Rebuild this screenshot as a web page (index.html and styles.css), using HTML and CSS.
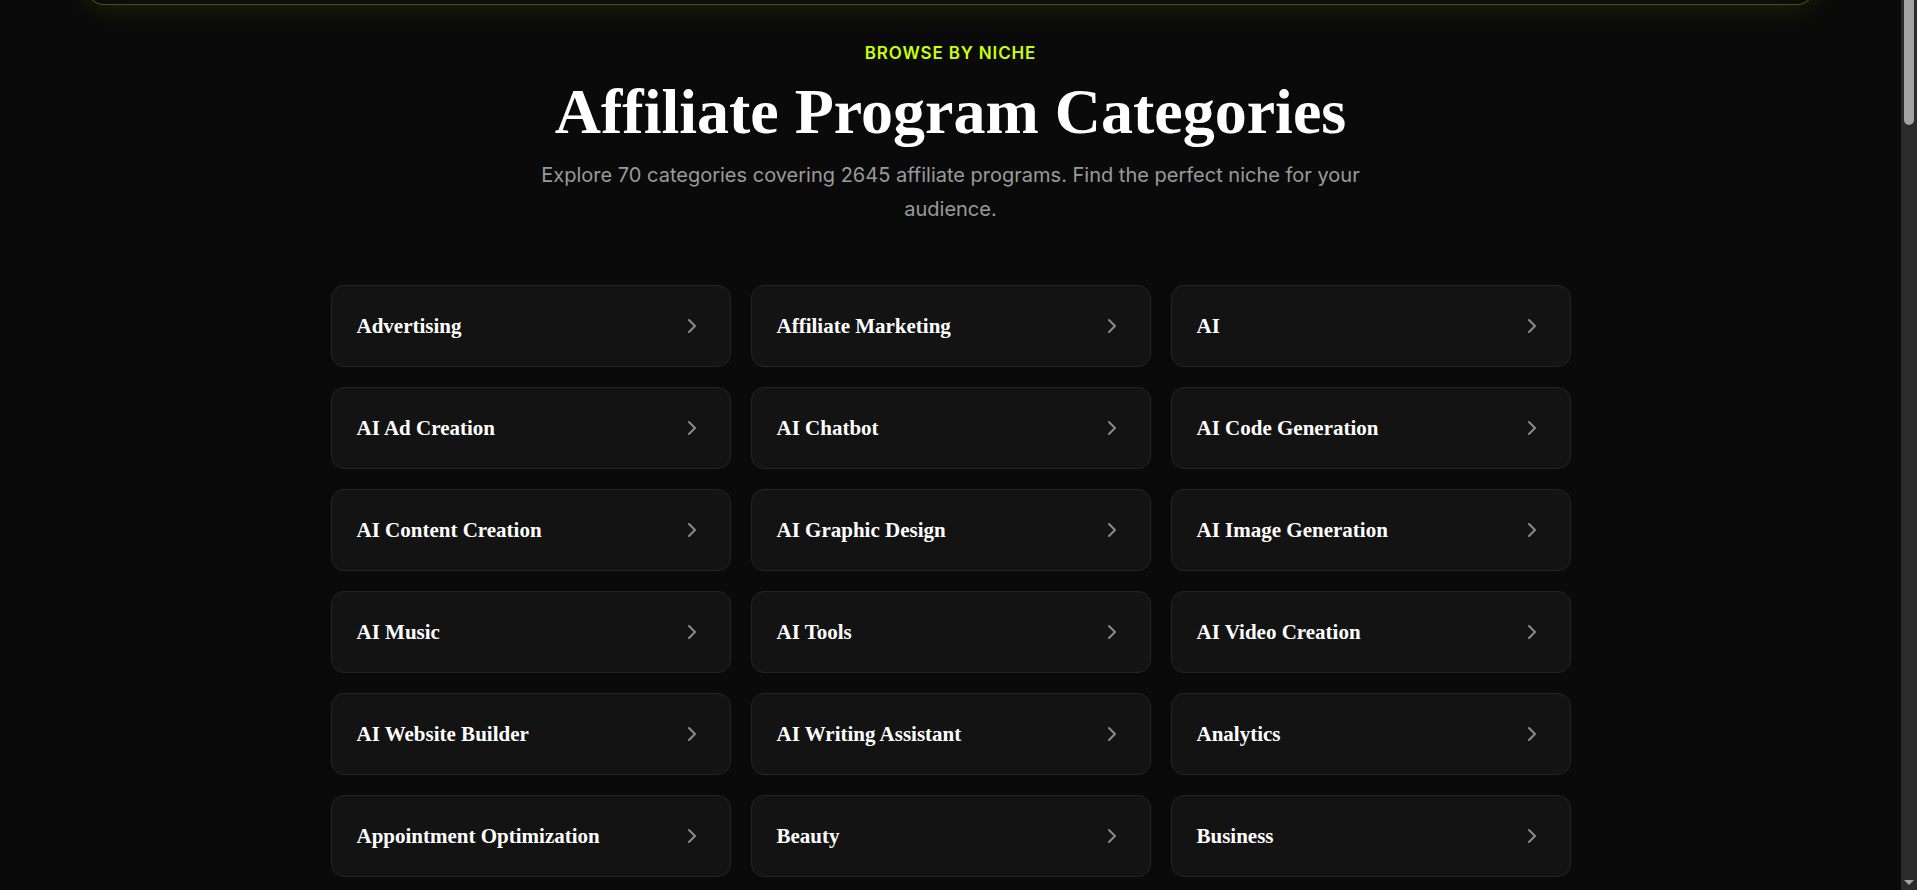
FILE: index.html
```html
<!DOCTYPE html>
<html lang="en">
<head>
<meta charset="utf-8">
<title>Affiliate Program Categories</title>
<link rel="stylesheet" href="styles.css">
</head>
<body>
<div class="app">
  <div class="page">
    <div class="navbar"></div>
    <section class="categories">
      <p class="eyebrow">BROWSE BY NICHE</p>
      <h1 class="title">Affiliate Program Categories</h1>
      <p class="subtitle">Explore 70 categories covering 2645 affiliate programs. Find the perfect niche for your audience.</p>
      <div class="grid">
        <a class="card" href="#"><span class="card-name">Advertising</span><svg class="chev" viewBox="0 0 24 24"><path d="m9 18 6-6-6-6"/></svg></a>
        <a class="card" href="#"><span class="card-name">Affiliate Marketing</span><svg class="chev" viewBox="0 0 24 24"><path d="m9 18 6-6-6-6"/></svg></a>
        <a class="card" href="#"><span class="card-name">AI</span><svg class="chev" viewBox="0 0 24 24"><path d="m9 18 6-6-6-6"/></svg></a>
        <a class="card" href="#"><span class="card-name">AI Ad Creation</span><svg class="chev" viewBox="0 0 24 24"><path d="m9 18 6-6-6-6"/></svg></a>
        <a class="card" href="#"><span class="card-name">AI Chatbot</span><svg class="chev" viewBox="0 0 24 24"><path d="m9 18 6-6-6-6"/></svg></a>
        <a class="card" href="#"><span class="card-name">AI Code Generation</span><svg class="chev" viewBox="0 0 24 24"><path d="m9 18 6-6-6-6"/></svg></a>
        <a class="card" href="#"><span class="card-name">AI Content Creation</span><svg class="chev" viewBox="0 0 24 24"><path d="m9 18 6-6-6-6"/></svg></a>
        <a class="card" href="#"><span class="card-name">AI Graphic Design</span><svg class="chev" viewBox="0 0 24 24"><path d="m9 18 6-6-6-6"/></svg></a>
        <a class="card" href="#"><span class="card-name">AI Image Generation</span><svg class="chev" viewBox="0 0 24 24"><path d="m9 18 6-6-6-6"/></svg></a>
        <a class="card" href="#"><span class="card-name">AI Music</span><svg class="chev" viewBox="0 0 24 24"><path d="m9 18 6-6-6-6"/></svg></a>
        <a class="card" href="#"><span class="card-name">AI Tools</span><svg class="chev" viewBox="0 0 24 24"><path d="m9 18 6-6-6-6"/></svg></a>
        <a class="card" href="#"><span class="card-name">AI Video Creation</span><svg class="chev" viewBox="0 0 24 24"><path d="m9 18 6-6-6-6"/></svg></a>
        <a class="card" href="#"><span class="card-name">AI Website Builder</span><svg class="chev" viewBox="0 0 24 24"><path d="m9 18 6-6-6-6"/></svg></a>
        <a class="card" href="#"><span class="card-name">AI Writing Assistant</span><svg class="chev" viewBox="0 0 24 24"><path d="m9 18 6-6-6-6"/></svg></a>
        <a class="card" href="#"><span class="card-name">Analytics</span><svg class="chev" viewBox="0 0 24 24"><path d="m9 18 6-6-6-6"/></svg></a>
        <a class="card" href="#"><span class="card-name">Appointment Optimization</span><svg class="chev" viewBox="0 0 24 24"><path d="m9 18 6-6-6-6"/></svg></a>
        <a class="card" href="#"><span class="card-name">Beauty</span><svg class="chev" viewBox="0 0 24 24"><path d="m9 18 6-6-6-6"/></svg></a>
        <a class="card" href="#"><span class="card-name">Business</span><svg class="chev" viewBox="0 0 24 24"><path d="m9 18 6-6-6-6"/></svg></a>
      </div>
    </section>
  </div>
  <div class="scrollbar">
    <div class="scroll-thumb"></div>
    <div class="scroll-space"></div>
    <div class="scroll-arrow"></div>
  </div>
</div>
</body>
</html>
```

FILE: styles.css
```css
* { box-sizing: border-box; }
html, body {
  margin: 0;
  padding: 0;
  height: 100%;
  overflow: hidden;
  background: #0a0a0a;
}
.app {
  display: flex;
  height: 100vh;
}
.page {
  flex: 1;
  position: relative;
  overflow: hidden;
}
.navbar {
  position: absolute;
  top: -60px;
  left: 86px;
  right: 86px;
  height: 65px;
  border: 1px solid rgba(204, 255, 0, 0.3);
  border-radius: 18px;
  background: #0c0c0c;
  box-shadow: 0 4px 30px rgba(204, 255, 0, 0.1);
}
.categories {
  max-width: 1240px;
  margin: 0 auto;
  padding-top: 43px;
  display: flex;
  flex-direction: column;
  align-items: center;
}
.eyebrow {
  margin: 0;
  font-family: Inter, "Liberation Sans", sans-serif;
  font-size: 17px;
  line-height: 20px;
  font-weight: 600;
  letter-spacing: 0.05em;
  color: #ccff00;
}
.title {
  margin: 14px 0 0;
  font-family: "Liberation Serif", "Times New Roman", serif;
  font-size: 64px;
  line-height: 70px;
  font-weight: 700;
  color: #ffffff;
  letter-spacing: 0;
}
.subtitle {
  margin: 11px 0 0;
  max-width: 896px;
  text-align: center;
  font-family: Inter, "Liberation Sans", sans-serif;
  font-size: 20px;
  line-height: 34px;
  color: #9a9a9a;
}
.grid {
  margin-top: 59px;
  width: 100%;
  display: grid;
  grid-template-columns: repeat(3, 1fr);
  gap: 20px;
}
.card {
  display: flex;
  align-items: center;
  justify-content: space-between;
  padding: 24px 26px 24px 25px;
  background: #131313;
  border: 1px solid #242424;
  border-radius: 13px;
  text-decoration: none;
}
.card-name {
  font-family: "Liberation Serif", "Times New Roman", serif;
  font-size: 21px;
  line-height: 32px;
  font-weight: 700;
  color: #ffffff;
}
.chev {
  width: 24px;
  height: 24px;
  fill: none;
  stroke: #8a8a8a;
  stroke-width: 2;
  stroke-linecap: round;
  stroke-linejoin: round;
}
.scrollbar {
  width: 16px;
  height: 100vh;
  background: #2b2b2b;
  display: flex;
  flex-direction: column;
  align-items: center;
}
.scroll-thumb {
  width: 10px;
  height: 125px;
  background: #a3a3a3;
  border-radius: 0 0 5px 5px;
}
.scroll-space { flex: 1; }
.scroll-arrow {
  width: 0;
  height: 0;
  border-left: 5px solid transparent;
  border-right: 5px solid transparent;
  border-top: 5px solid #a3a3a3;
  margin-bottom: 5px;
}
```
